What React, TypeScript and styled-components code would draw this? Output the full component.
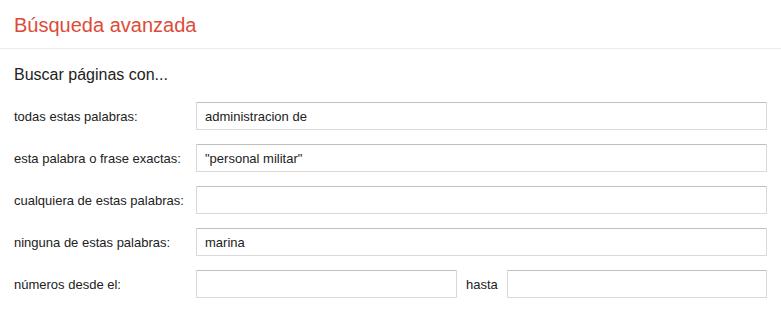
import React from "react";
import styled, { createGlobalStyle } from "styled-components";

const GlobalStyle = createGlobalStyle`
  body {
    margin: 0;
    background: #fff;
    font-family: Arial, "Liberation Sans", sans-serif;
  }
`;

const Page = styled.div`
  width: 781px;
`;

const Header = styled.header`
  height: 49px;
  border-bottom: 1px solid #ebebeb;
  padding: 2px 14px 0;
  box-sizing: border-box;
  display: flex;
  align-items: center;
`;

const Title = styled.h1`
  margin: 0;
  font-size: 20px;
  font-weight: normal;
  color: #dd4b39;
  line-height: 24px;
`;

const Form = styled.form`
  padding: 16px 14px 0;
  display: flex;
  flex-direction: column;
  gap: 14px;
`;

const Heading = styled.h2`
  margin: 0 0 3px;
  font-size: 16px;
  font-weight: normal;
  color: #222;
  line-height: 20px;
`;

const Row = styled.div`
  display: flex;
  align-items: center;
  height: 28px;
`;

const Label = styled.label`
  width: 182px;
  flex: none;
  font-size: 13px;
  color: #222;
`;

const TextInput = styled.input<{ $width?: number }>`
  box-sizing: border-box;
  height: 28px;
  ${(p) => (p.$width ? `width: ${p.$width}px; flex: none;` : "flex: 1; min-width: 0;")}
  border: 1px solid #d9d9d9;
  border-top-color: #c0c0c0;
  border-radius: 1px;
  padding: 0 8px;
  font-family: Arial, "Liberation Sans", sans-serif;
  font-size: 13px;
  color: #222;
  background: #fff;
  outline: none;
`;

const Between = styled.span`
  padding: 0 9px;
  font-size: 13px;
  color: #222;
`;

const fields = [
  { label: "todas estas palabras:", value: "administracion de" },
  { label: "esta palabra o frase exactas:", value: "\"personal militar\"" },
  { label: "cualquiera de estas palabras:", value: "" },
  { label: "ninguna de estas palabras:", value: "marina" },
];

const App: React.FC = () => {
  return (
    <Page>
      <GlobalStyle />
      <Header>
        <Title>Búsqueda avanzada</Title>
      </Header>
      <Form onSubmit={(e) => e.preventDefault()}>
        <Heading>Buscar páginas con...</Heading>
        {fields.map((f) => (
          <Row key={f.label}>
            <Label>{f.label}</Label>
            <TextInput type="text" defaultValue={f.value} />
          </Row>
        ))}
        <Row>
          <Label>números desde el:</Label>
          <TextInput type="text" $width={261} />
          <Between>hasta</Between>
          <TextInput type="text" />
        </Row>
      </Form>
    </Page>
  );
};

export default App;
